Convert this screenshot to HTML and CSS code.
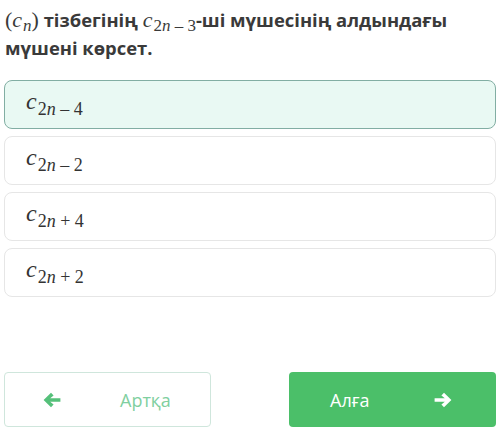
FILE: index.html
```html
<!DOCTYPE html>
<html>
<head>
<meta charset="utf-8">
<link rel="stylesheet" href="styles.css">
</head>
<body>
<div class="page">
  <h1 class="question"><span class="math">(<i>c</i><sub><i>n</i></sub>)</span> тізбегінің <span class="math"><i>c</i><sub>2<i>n</i> – 3</sub></span>-ші мүшесінің алдындағы мүшені көрсет.</h1>
  <div class="options">
    <div class="option selected"><span class="math big"><i>c</i><sub>2<i>n</i> – 4</sub></span></div>
    <div class="option"><span class="math big"><i>c</i><sub>2<i>n</i> – 2</sub></span></div>
    <div class="option"><span class="math big"><i>c</i><sub>2<i>n</i> + 4</sub></span></div>
    <div class="option"><span class="math big"><i>c</i><sub>2<i>n</i> + 2</sub></span></div>
  </div>
  <div class="nav">
    <button class="btn back">
      <svg class="arrow" viewBox="0 0 18 16" width="18" height="16"><path fill="currentColor" d="M0.6 8 L8 0.8 L10.6 3.4 L7.2 6.2 L17.4 6.2 L17.4 9.8 L7.2 9.8 L10.6 12.6 L8 15.2 Z"/></svg>
      <span class="label">Артқа</span>
    </button>
    <button class="btn next">
      <span class="label">Алға</span>
      <svg class="arrow" viewBox="0 0 18 16" width="18" height="16"><path fill="currentColor" d="M17.4 8 L10 0.8 L7.4 3.4 L10.8 6.2 L0.6 6.2 L0.6 9.8 L10.8 9.8 L7.4 12.6 L10 15.2 Z"/></svg>
    </button>
  </div>
</div>
</body>
</html>
```
FILE: styles.css
```css
* { box-sizing: border-box; }
html, body { margin: 0; padding: 0; background: #fff; }
body { font-family: "Open Sans", "Noto Sans", sans-serif; color: #333; }
.page { width: 500px; height: 439px; padding: 0 4px; display: flex; flex-direction: column; }
.question {
  margin: 0;
  padding: 6px 1px 0;
  font-size: 18.4px;
  font-weight: 700;
  line-height: 27px;
  color: #3a3a3a;
}
.math { font-family: "Liberation Serif", "DejaVu Serif", serif; font-weight: 400; font-size: 22px; }
.math i { font-style: italic; }
.math sub { font-size: 17px; vertical-align: -4px; line-height: 1; margin-left: 1px; }
.options { margin-top: 19px; display: flex; flex-direction: column; gap: 7px; }
.option {
  height: 49px;
  border: 1px solid #e6e6e6;
  border-radius: 8px;
  background: #fff;
  padding: 0 0 0 21px;
  display: flex;
  align-items: center;
  color: #333;
}
.option.selected { background: #e9f9f3; border-color: #82aea3; }
.math.big { font-size: 24px; position: relative; top: -2px; }
.math.big sub { font-size: 18px; vertical-align: -6px; }
.nav { margin-top: auto; margin-bottom: 12px; display: flex; justify-content: space-between; }
.btn {
  width: 207px;
  height: 55px;
  border-radius: 4px;
  font-family: "Open Sans", sans-serif;
  font-size: 18px;
  display: flex;
  align-items: center;
  text-align: left;
  cursor: pointer;
}
.btn.back { background: #fff; border: 1px solid #cfe6dc; color: #7fcfa0; padding: 0 0 0 38px; }
.btn.back .arrow { color: #55c07a; }
.btn.back .label { margin-left: 59px; }
.btn.next { background: #4bbf69; border: none; color: #fff; padding: 0 0 0 41px; }
.btn.next .label { width: 104px; }
.btn.next .arrow { color: #fff; }
```
